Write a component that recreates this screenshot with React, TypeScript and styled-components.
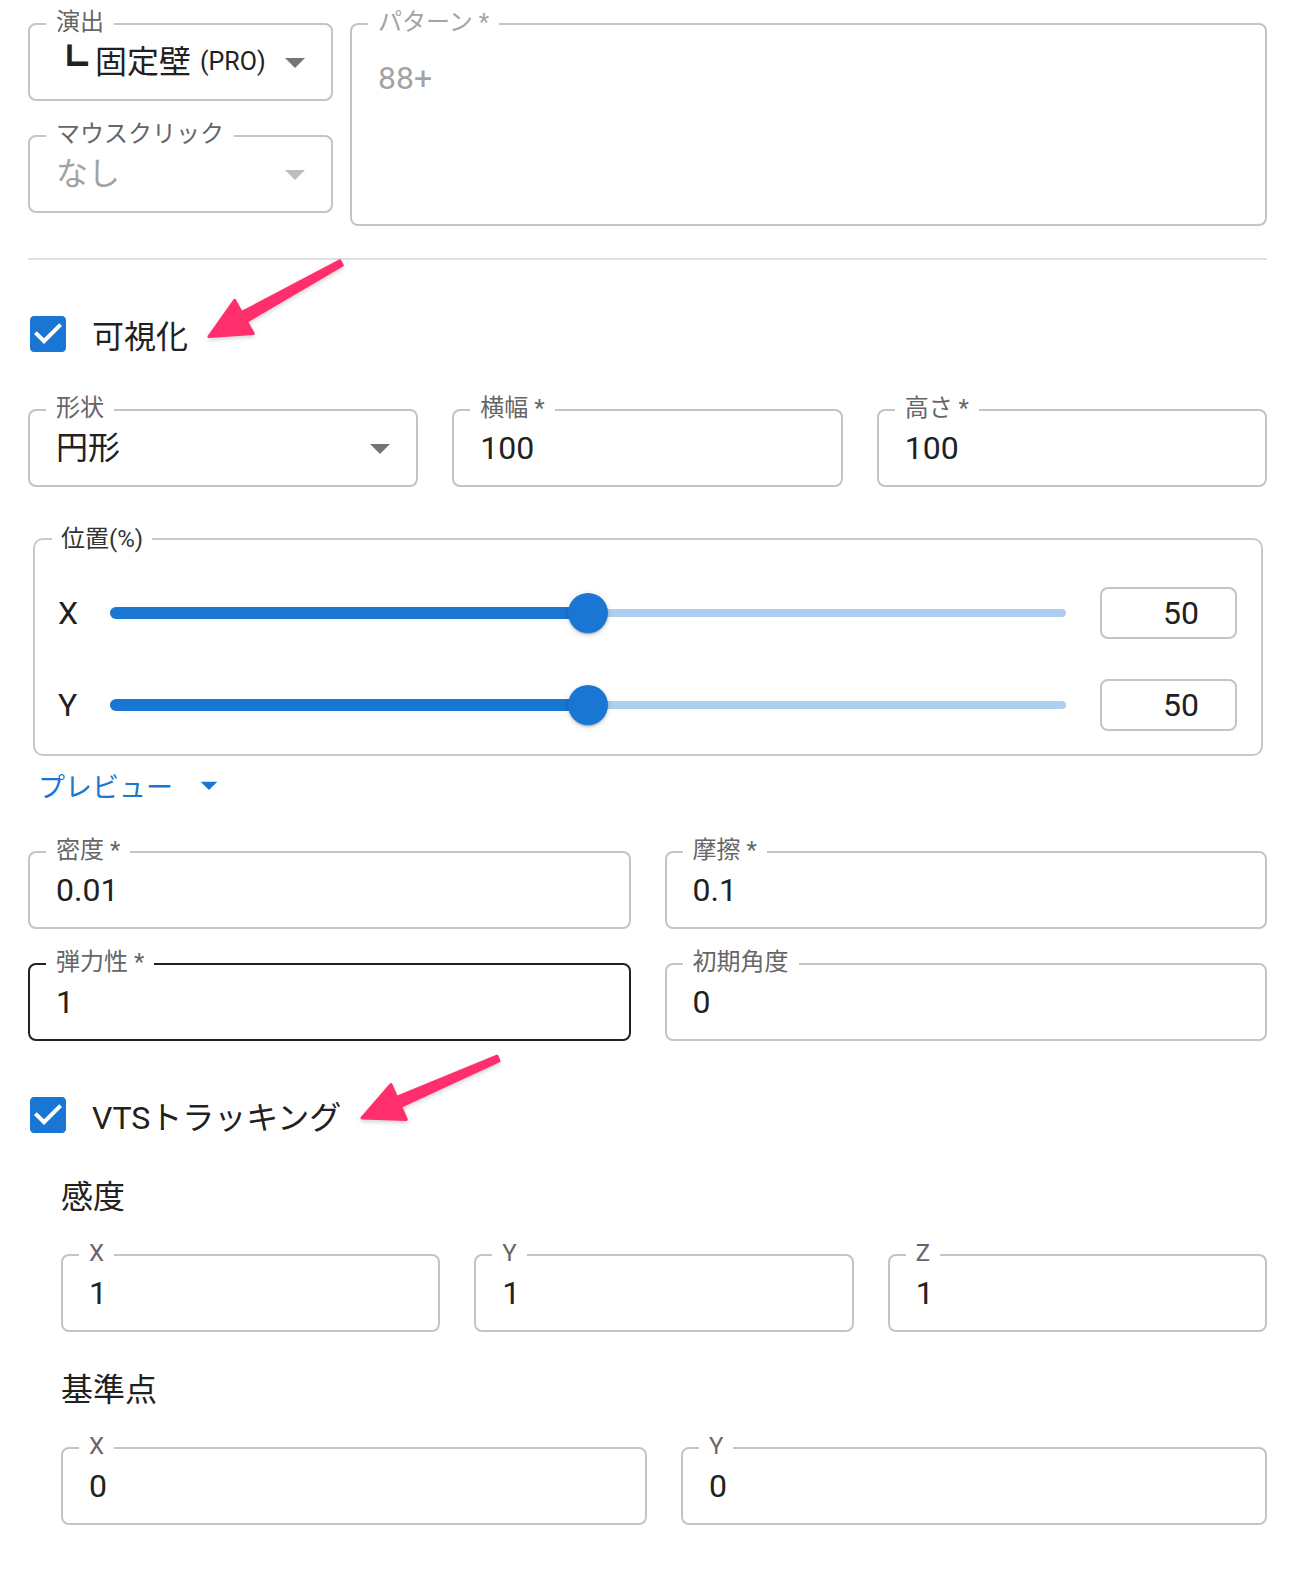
import React from "react";
import styled, { createGlobalStyle } from "styled-components";

const GlobalStyle = createGlobalStyle`
  html, body { margin: 0; padding: 0; background: #fff; }
  body {
    font-family: Roboto, "Noto Sans CJK JP", sans-serif;
    color: rgba(0, 0, 0, 0.87);
  }
  * { box-sizing: border-box; }
`;

const Page = styled.div`
  position: relative;
  width: 1304px;
  min-height: 1572px;
  padding: 23px 37px 47px 28px;
  display: flex;
  flex-direction: column;
`;

const TopGrid = styled.div`
  display: grid;
  grid-template-columns: 305px 1fr;
  column-gap: 17px;
  align-items: start;
`;

const Stack = styled.div`
  display: flex;
  flex-direction: column;
  gap: 34px;
`;

const FieldBox = styled.div<{ $height?: number; $dark?: boolean; $select?: boolean; $multiline?: boolean }>`
  position: relative;
  height: ${(p) => p.$height ?? 78}px;
  border: 2px solid ${(p) => (p.$dark ? "#212121" : "#c4c4c4")};
  border-radius: 8px;
  padding: ${(p) => (p.$multiline ? "30px 26px 0" : p.$select ? "0 12px 0 26px" : "0 26px")};
  display: flex;
  align-items: ${(p) => (p.$multiline ? "flex-start" : "center")};
`;

const FieldLabel = styled.span<{ $muted?: boolean }>`
  position: absolute;
  top: -18px;
  left: 16px;
  padding: 0 10px;
  background: #fff;
  font-size: 24px;
  line-height: 30px;
  white-space: nowrap;
  color: ${(p) => (p.$muted ? "#a3a3a3" : "#666666")};
`;

const Value = styled.div<{ $muted?: boolean }>`
  flex: 1;
  min-width: 0;
  display: flex;
  align-items: center;
  font-size: 32px;
  line-height: 46px;
  white-space: nowrap;
  color: ${(p) => (p.$muted ? "#a3a3a3" : "#212121")};
`;

/* tree-branch marker in front of the selected sub-item */
const Branch = styled.span`
  display: inline-block;
  width: 44px;
  margin-left: -5px;
  font-family: "Noto Sans CJK JP", sans-serif;
  font-size: 37px;
  line-height: 46px;
`;

const Pro = styled.span`
  margin-left: 9px;
  font-size: 25px;
`;

const DropIcon = styled.svg<{ $muted?: boolean }>`
  flex: none;
  width: 48px;
  height: 48px;
  fill: ${(p) => (p.$muted ? "#bdbdbd" : "#757575")};
`;

const Divider = styled.div`
  margin-top: 32px;
  height: 2px;
  background: #e0e0e0;
`;

const CheckRow = styled.div<{ $top: number }>`
  margin-top: ${(p) => p.$top}px;
  margin-left: -4px;
  height: 48px;
  display: flex;
  align-items: center;
  gap: 20px;
  font-size: 32px;
  color: #212121;
`;

const CheckIcon = styled.svg`
  width: 48px;
  height: 48px;
  fill: #1976d2;
`;

const FieldGrid = styled.div<{ $cols: number; $top: number }>`
  margin-top: ${(p) => p.$top}px;
  display: grid;
  grid-template-columns: repeat(${(p) => p.$cols}, 1fr);
  column-gap: 34px;
  row-gap: 34px;
`;

const Panel = styled.div`
  position: relative;
  margin: 51px 4px 0 5px;
  border: 2px solid #c9c9c9;
  border-radius: 10px;
  padding: 47px 24px 23px 23px;
  display: grid;
  grid-template-columns: 18px 1fr 137px;
  column-gap: 34px;
  row-gap: 40px;
  align-items: center;
`;

const PanelLabel = styled.span`
  position: absolute;
  top: -16px;
  left: 17px;
  padding: 0 9px;
  background: #fff;
  font-size: 24px;
  line-height: 30px;
  color: #333333;
`;

const AxisName = styled.span`
  font-size: 32px;
  line-height: 52px;
  white-space: nowrap;
  color: #212121;
`;

const SliderRoot = styled.div`
  position: relative;
  height: 40px;
  display: flex;
  align-items: center;
`;

const Rail = styled.div`
  position: absolute;
  left: 0;
  right: 0;
  height: 8px;
  border-radius: 4px;
  background: #1976d2;
  opacity: 0.36;
`;

const Track = styled.div`
  position: absolute;
  left: 0;
  height: 12px;
  border-radius: 6px;
  background: #1976d2;
`;

const Thumb = styled.div`
  position: absolute;
  width: 40px;
  height: 40px;
  margin-left: -20px;
  border-radius: 50%;
  background: #1976d2;
  box-shadow: 0 3px 1px -2px rgba(0, 0, 0, 0.2), 0 2px 3px 0 rgba(0, 0, 0, 0.14),
    0 1px 6px 0 rgba(0, 0, 0, 0.12);
`;

const NumberBox = styled.div`
  height: 52px;
  border: 2px solid #c4c4c4;
  border-radius: 8px;
  padding-right: 36px;
  font-size: 32px;
  line-height: 48px;
  text-align: right;
  color: #212121;
`;

const MenuButton = styled.div`
  align-self: flex-start;
  margin: 5px 0 0 10px;
  height: 48px;
  display: inline-flex;
  align-items: center;
  gap: 16px;
  font-size: 27px;
  color: #1976d2;
`;

const MenuIcon = styled.svg`
  width: 40px;
  height: 40px;
  fill: #1976d2;
`;

const Inset = styled.div`
  padding-left: 33px;
  display: flex;
  flex-direction: column;
`;

const Heading = styled.div<{ $top: number }>`
  margin-top: ${(p) => p.$top}px;
  font-size: 32px;
  line-height: 48px;
  color: #212121;
`;

const Annotations = styled.svg`
  position: absolute;
  top: 0;
  left: 0;
  width: 1304px;
  height: 1572px;
  pointer-events: none;
  filter: drop-shadow(0 2px 2px rgba(0, 0, 0, 0.18));
`;

type Pt = [number, number];

function arrowPoints(tip: Pt, tail: Pt): string {
  const dx = tail[0] - tip[0];
  const dy = tail[1] - tip[1];
  const len = Math.hypot(dx, dy);
  const ux = dx / len;
  const uy = dy / len;
  const nx = -uy;
  const ny = ux;
  const head = 40;
  const wing = 19;
  const neck = 5;
  const end = 2.5;
  const bx = tip[0] + ux * head;
  const by = tip[1] + uy * head;
  const p = (x: number, y: number) => `${x.toFixed(1)},${y.toFixed(1)}`;
  return [
    p(tip[0], tip[1]),
    p(bx + nx * wing, by + ny * wing),
    p(bx + nx * neck, by + ny * neck),
    p(tail[0] + nx * end, tail[1] + ny * end),
    p(tail[0] - nx * end, tail[1] - ny * end),
    p(bx - nx * neck, by - ny * neck),
    p(bx - nx * wing, by - ny * wing),
  ].join(" ");
}

const Drop = ({ muted }: { muted?: boolean }) => (
  <DropIcon $muted={muted} viewBox="0 0 24 24">
    <path d="M7 10l5 5 5-5z" />
  </DropIcon>
);

const Checked = () => (
  <CheckIcon viewBox="0 0 24 24">
    <path d="M19 3H5c-1.11 0-2 .9-2 2v14c0 1.1.89 2 2 2h14c1.11 0 2-.9 2-2V5c0-1.1-.89-2-2-2zm-9 14l-5-5 1.41-1.41L10 14.17l7.59-7.59L19 8l-9 9z" />
  </CheckIcon>
);

type TextFieldProps = { label: string; value: string; dark?: boolean };

const TextField = ({ label, value, dark }: TextFieldProps) => (
  <FieldBox $dark={dark}>
    <FieldLabel>{label}</FieldLabel>
    <Value>{value}</Value>
  </FieldBox>
);

const Slider = ({ value }: { value: number }) => (
  <SliderRoot>
    <Rail />
    <Track style={{ width: `${value}%` }} />
    <Thumb style={{ left: `${value}%` }} />
  </SliderRoot>
);

const position = [
  { axis: "X", value: 50 },
  { axis: "Y", value: 50 },
];

export default function App() {
  return (
    <>
      <GlobalStyle />
      <Page>
        <TopGrid>
          <Stack>
            <FieldBox $select>
              <FieldLabel>演出</FieldLabel>
              <Value>
                <Branch>┗</Branch>
                <span>固定壁</span>
                <Pro>(PRO)</Pro>
              </Value>
              <Drop />
            </FieldBox>
            <FieldBox $select>
              <FieldLabel>マウスクリック</FieldLabel>
              <Value $muted>なし</Value>
              <Drop muted />
            </FieldBox>
          </Stack>
          <FieldBox $multiline $height={203}>
            <FieldLabel $muted>パターン *</FieldLabel>
            <Value $muted>88+</Value>
          </FieldBox>
        </TopGrid>

        <Divider />

        <CheckRow $top={50}>
          <Checked />
          <span>可視化</span>
        </CheckRow>

        <FieldGrid $cols={3} $top={51}>
          <FieldBox $select>
            <FieldLabel>形状</FieldLabel>
            <Value>円形</Value>
            <Drop />
          </FieldBox>
          <TextField label="横幅 *" value="100" />
          <TextField label="高さ *" value="100" />
        </FieldGrid>

        <Panel>
          <PanelLabel>位置(%)</PanelLabel>
          {position.map((row) => (
            <React.Fragment key={row.axis}>
              <AxisName>{row.axis}</AxisName>
              <Slider value={row.value} />
              <NumberBox>{row.value}</NumberBox>
            </React.Fragment>
          ))}
        </Panel>

        <MenuButton>
          <span>プレビュー</span>
          <MenuIcon viewBox="0 0 24 24">
            <path d="M7 10l5 5 5-5z" />
          </MenuIcon>
        </MenuButton>

        <FieldGrid $cols={2} $top={42}>
          <TextField label="密度 *" value="0.01" />
          <TextField label="摩擦 *" value="0.1" />
          <TextField label="弾力性 *" value="1" dark />
          <TextField label="初期角度" value="0" />
        </FieldGrid>

        <CheckRow $top={50}>
          <Checked />
          <span>VTSトラッキング</span>
        </CheckRow>

        <Inset>
          <Heading $top={34}>感度</Heading>
          <FieldGrid $cols={3} $top={33}>
            <TextField label="X" value="1" />
            <TextField label="Y" value="1" />
            <TextField label="Z" value="1" />
          </FieldGrid>
          <Heading $top={34}>基準点</Heading>
          <FieldGrid $cols={2} $top={33}>
            <TextField label="X" value="0" />
            <TextField label="Y" value="0" />
          </FieldGrid>
        </Inset>

        <Annotations viewBox="0 0 1304 1572">
          <polygon
            points={arrowPoints([209, 336.5], [341, 263])}
            fill="#ff2e6c"
            stroke="#ff2e6c"
            strokeWidth={3}
            strokeLinejoin="round"
          />
          <polygon
            points={arrowPoints([362, 1118], [498, 1058.5])}
            fill="#ff2e6c"
            stroke="#ff2e6c"
            strokeWidth={3}
            strokeLinejoin="round"
          />
        </Annotations>
      </Page>
    </>
  );
}
